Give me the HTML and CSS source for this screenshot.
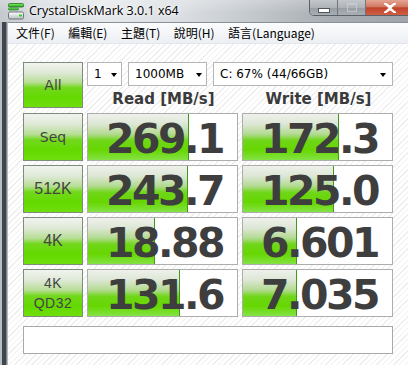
FILE: index.html
```html
<!DOCTYPE html>
<html lang="zh-Hant">
<head>
<meta charset="utf-8">
<title>CrystalDiskMark 3.0.1 x64</title>
<link rel="stylesheet" href="styles.css">
</head>
<body>
<div class="screen">
  <header class="titlebar">
    <svg class="appicon" width="17" height="18" viewBox="0 0 17 18">
      <defs>
        <linearGradient id="gbar" x1="0" y1="0" x2="0" y2="1">
          <stop offset="0" stop-color="#8ef06a"/>
          <stop offset="1" stop-color="#1fa51f"/>
        </linearGradient>
        <linearGradient id="disk" x1="0" y1="0" x2="0" y2="1">
          <stop offset="0" stop-color="#ffffff"/>
          <stop offset="1" stop-color="#b9bec3"/>
        </linearGradient>
      </defs>
      <rect x="0.5" y="1.5" width="15" height="3.5" rx="1" fill="url(#gbar)" stroke="#1c7a1c" stroke-width="0.8"/>
      <rect x="0.5" y="6" width="10" height="2" rx="0.8" fill="url(#gbar)" stroke="#1c7a1c" stroke-width="0.6"/>
      <rect x="0.5" y="10" width="15" height="7" rx="1.5" fill="url(#disk)" stroke="#6d7378" stroke-width="1"/>
      <rect x="11" y="12.5" width="3" height="2" fill="#2fd02f"/>
    </svg>
    <span class="title">CrystalDiskMark 3.0.1 x64</span>
    <div class="caption-buttons">
      <div class="cbtn min"><span class="glyph-min"></span></div>
      <div class="cbtn max"><span class="glyph-max"></span></div>
      <div class="cbtn close">
        <svg width="12" height="10" viewBox="0 0 12 10"><path d="M1 0.5 L6 4 L11 0.5 M1 9.5 L6 6 L11 9.5 M2 1 L10 9 M10 1 L2 9" stroke="#ffffff" stroke-width="2.2" fill="none" stroke-linecap="square"/></svg>
      </div>
    </div>
  </header>
  <div class="client">
    <nav class="menubar">
      <span class="menu-item">文件(F)</span>
      <span class="menu-item">編輯(E)</span>
      <span class="menu-item">主題(T)</span>
      <span class="menu-item">說明(H)</span>
      <span class="menu-item">語言(Language)</span>
    </nav>
    <main class="content">
      <div class="grid">
        <div class="label all">All</div>
        <div class="controls">
          <div class="selects">
            <div class="select s-count"><span>1</span><i class="arrow"></i></div>
            <div class="select s-size"><span>1000MB</span><i class="arrow"></i></div>
            <div class="select s-drive"><span>C: 67% (44/66GB)</span><i class="arrow"></i></div>
          </div>
          <div class="heads">
            <div class="head">Read [MB/s]</div>
            <div class="head">Write [MB/s]</div>
          </div>
        </div>

        <div class="label">Seq</div>
        <div class="value" style="--w:101px">269.1</div>
        <div class="value" style="--w:96px">172.3</div>

        <div class="label k">512K</div>
        <div class="value" style="--w:100px">243.7</div>
        <div class="value" style="--w:91px">125.0</div>

        <div class="label k">4K</div>
        <div class="value" style="--w:67px">18.88</div>
        <div class="value" style="--w:54px">6.601</div>

        <div class="label k two">4K<br>QD32</div>
        <div class="value" style="--w:92px">131.6</div>
        <div class="value" style="--w:54px">7.035</div>

        <div class="status"></div>
      </div>
    </main>
  </div>
</div>
</body>
</html>
```
FILE: styles.css
```css
html, body {
  margin: 0;
  padding: 0;
}
body {
  width: 408px;
  height: 365px;
  overflow: hidden;
  background: #ffffff;
}
.screen {
  width: 408px;
  height: 365px;
  display: flex;
  flex-direction: column;
  background: linear-gradient(to right, #b7bdc3 0, #b7bdc3 2px, #3f464d 2px, #3f464d 6px, #7d848b 6px, #7d848b 7px, #ffffff 7px);
}
.titlebar {
  height: 22px;
  flex: none;
  display: flex;
  align-items: flex-start;
  background:
    linear-gradient(to bottom, rgba(255,255,255,0.25), rgba(255,255,255,0) 60%),
    linear-gradient(to right, #c4c9ce 0%, #d9dde1 10%, #e6e9ec 25%, #dadee2 45%, #c3c8cd 62%, #a9aeb4 80%, #9ea4aa 100%);
}
.appicon {
  margin: 2px 0 0 8px;
  flex: none;
}
.title {
  margin: 3px 0 0 4px;
  font-family: "Open Sans", "Noto Sans", sans-serif;
  font-size: 12.5px;
  line-height: 16px;
  color: #000000;
  text-shadow: 0 0 6px #ffffff, 0 0 3px #ffffff;
  white-space: nowrap;
}
.caption-buttons {
  margin-left: auto;
  display: flex;
  height: 15px;
  margin-right: -6px;
  border: 1px solid #5b6168;
  border-top: none;
  border-radius: 0 0 5px 5px;
  overflow: hidden;
  box-shadow: inset 0 0 0 1px rgba(255,255,255,0.45);
}
.cbtn {
  height: 15px;
  display: flex;
  align-items: center;
  justify-content: center;
}
.cbtn.min, .cbtn.max {
  width: 27px;
  background: linear-gradient(to bottom, #c3c7cb 0%, #aeb3b8 50%, #979da3 51%, #a9aeb3 100%);
  border-right: 1px solid #6f757b;
}
.cbtn.close {
  width: 47px;
  background: linear-gradient(to bottom, #e3a593 0%, #d27a62 45%, #c0432a 52%, #cf5f44 100%);
}
.glyph-min {
  display: block;
  width: 10px;
  height: 3px;
  margin-top: 5px;
  background: #ffffff;
  border: 1px solid #4f555b;
}
.glyph-max {
  display: block;
  width: 8px;
  height: 6px;
  border: 1px solid #c9cdd1;
  border-top-width: 2px;
  opacity: 0.8;
}
.client {
  flex: 1;
  margin-left: 7px;
  display: flex;
  flex-direction: column;
  border-top: 1px solid #8a9097;
  border-left: 1px solid #b4b9be;
  min-height: 0;
}
.menubar {
  height: 20px;
  flex: none;
  display: flex;
  align-items: center;
  padding-left: 8px;
  gap: 13.5px;
  background: linear-gradient(to bottom, #fbfcfd, #eceff3);
  border-bottom: 1px solid #e3e6ea;
  font-family: "Noto Sans CJK TC", "Noto Sans", sans-serif;
  font-size: 12px;
  color: #000000;
}
.menu-item {
  line-height: 16px;
  white-space: nowrap;
}
.content {
  flex: 1;
  background: repeating-linear-gradient(135deg, #ffffff 0, #ffffff 3px, #eeeeee 3px, #eeeeee 4px);
  padding: 18px 0 0 15px;
}
.grid {
  display: grid;
  grid-template-columns: 60px 151px 151px;
  grid-template-rows: 47px 48px 48px 48px 48px 28px;
  column-gap: 4px;
  row-gap: 4px;
}
.label {
  box-sizing: border-box;
  border: 1px solid #7e8c7b;
  background: linear-gradient(to bottom, #f1f4ef 0%, #dfe9d7 22%, #b7de95 44%, #74d81e 56%, #63d900 78%, #6fde0e 100%);
  display: flex;
  align-items: center;
  justify-content: center;
  text-align: center;
  font-family: "DejaVu Sans", sans-serif;
  font-size: 14px;
  color: #444444;
  line-height: 20px;
}
.label.all {
  height: 46px;
}
.label.k {
  font-family: "Liberation Sans", sans-serif;
  font-size: 16px;
}
.label.two {
  font-size: 14px;
  letter-spacing: 0.5px;
}
.controls {
  grid-column: 2 / 4;
  display: flex;
  flex-direction: column;
}
.selects {
  display: flex;
  gap: 6px;
  height: 24px;
}
.select {
  box-sizing: border-box;
  height: 24px;
  border: 1px solid #b5b5b5;
  background: #ffffff;
  display: flex;
  align-items: center;
  padding: 0 4px 0 6px;
  font-family: "DejaVu Sans", sans-serif;
  font-size: 12px;
  color: #000000;
}
.select span {
  flex: 1;
  white-space: nowrap;
}
.s-count { width: 35px; }
.s-size { width: 79px; }
.s-drive { width: 180px; padding-right: 6px; }
.arrow {
  width: 0;
  height: 0;
  border-left: 3.5px solid transparent;
  border-right: 3.5px solid transparent;
  border-top: 4px solid #000000;
  margin-top: 1px;
}
.heads {
  display: grid;
  grid-template-columns: 151px 151px;
  column-gap: 4px;
  margin-top: 4px;
}
.head {
  text-align: center;
  font-family: "DejaVu Sans", sans-serif;
  font-weight: bold;
  font-size: 15px;
  line-height: 18px;
  color: #3b3b3b;
  padding-left: 2px;
}
.value {
  box-sizing: border-box;
  border: 1px solid #adadad;
  background-color: #ffffff;
  background-image:
    linear-gradient(#3f9a1c, #3f9a1c),
    linear-gradient(to bottom, #eef1ec 0%, #dde7d5 22%, #b2da90 44%, #70d61a 57%, #66d700 78%, #85e246 100%);
  background-repeat: no-repeat;
  background-size: 1px 100%, var(--w) 100%;
  background-position: calc(var(--w) - 1px) 0, 0 0;
  font-family: "DejaVu Sans", sans-serif;
  font-weight: bold;
  font-size: 41px;
  letter-spacing: -2.5px;
  line-height: 46px;
  padding-top: 2px;
  padding-left: 4px;
  text-align: center;
  color: #3e3e3e;
  white-space: nowrap;
}
.status {
  grid-column: 1 / 4;
  margin-top: 5px;
  box-sizing: border-box;
  height: 28px;
  border: 1px solid #a9a9a9;
  background: #ffffff;
}
```
